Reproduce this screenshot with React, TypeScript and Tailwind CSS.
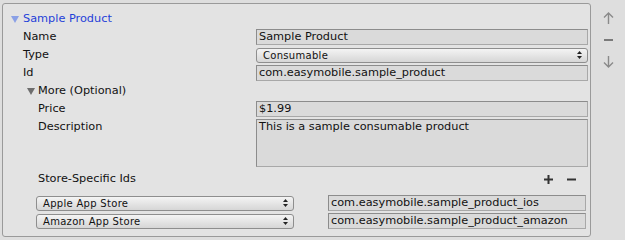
import React from "react";

const font = { fontFamily: '"DejaVu Sans", Verdana, sans-serif' };

const UpDown = () => (
  <svg width="5" height="8" viewBox="0 0 5 8" className="shrink-0">
    <path d="M2.5 0 L5 3 L0 3 Z" fill="#222" />
    <path d="M2.5 8 L5 5 L0 5 Z" fill="#222" />
  </svg>
);

const TextField = ({ value, className = "" }: { value: string; className?: string }) => (
  <div
    className={`h-[16px] border border-[#8c8c8c] border-b-[#a8a8a8] border-r-[#a8a8a8] bg-[#dadada] pl-[2px] text-[11.3px] leading-[14px] text-[#111] whitespace-nowrap overflow-hidden ${className}`}
  >
    {value}
  </div>
);

const Dropdown = ({ value, className = "" }: { value: string; className?: string }) => (
  <div
    className={`h-[15px] flex items-center justify-between rounded-[3px] border border-[#8e8e8e] bg-gradient-to-b from-[#f4f4f4] to-[#d6d6d6] pl-[6px] pr-[5px] text-[10px] leading-[13px] tracking-[0.3px] text-[#111] ${className}`}
  >
    <span>{value}</span>
    <UpDown />
  </div>
);

const Row = ({ label, indent, children }: { label: string; indent?: boolean; children: React.ReactNode }) => (
  <div className={`flex h-[18px] items-center pr-[2px] ${indent ? "pl-[35px]" : "pl-[20px]"}`}>
    <div className={`${indent ? "w-[218px]" : "w-[233px]"} shrink-0 text-[11.3px] text-[#111]`}>{label}</div>
    <div className="flex-1">{children}</div>
  </div>
);

export default function App() {
  return (
    <div className="w-[625px] h-[240px] bg-[#dedede] flex pl-[2px] pt-[3px]" style={font}>
      <div className="w-[589px] h-[234px] shrink-0 rounded-[3px] border border-[#9a9a9a] bg-[#e3e3e3] pt-[6px] flex flex-col">
        <div className="flex h-[18px] items-center pl-[8px]">
          <svg width="8" height="7" viewBox="0 0 8 7" className="mr-[4px]">
            <path d="M0 0 H8 L4 7 Z" fill="#8aa0e6" />
          </svg>
          <span className="text-[11.3px] text-[#1f3fd9]">Sample Product</span>
        </div>
        <Row label="Name">
          <TextField value="Sample Product" />
        </Row>
        <Row label="Type">
          <Dropdown value="Consumable" />
        </Row>
        <Row label="Id">
          <TextField value="com.easymobile.sample_product" />
        </Row>
        <div className="flex h-[18px] items-center pl-[24px]">
          <svg width="8" height="7" viewBox="0 0 8 7" className="mr-[3px]">
            <path d="M0 0 H8 L4 7 Z" fill="#6e6e6e" />
          </svg>
          <span className="text-[11.3px] text-[#111]">More (Optional)</span>
        </div>
        <Row label="Price" indent>
          <TextField value="$1.99" />
        </Row>
        <div className="flex pl-[35px] pr-[2px] pt-[1px]">
          <div className="w-[218px] shrink-0 text-[11.3px] text-[#111] leading-[16px]">Description</div>
          <div className="flex-1">
            <TextField value="This is a sample consumable product" className="h-[48px]" />
          </div>
        </div>
        <div className="flex h-[18px] items-center pl-[35px] pr-[14px] mt-[3px]">
          <span className="flex-1 text-[11.3px] text-[#111]">Store-Specific Ids</span>
          <svg width="9" height="9" viewBox="0 0 9 9" className="mr-[14px]">
            <path d="M4.5 0 V9 M0 4.5 H9" stroke="#333" strokeWidth="2" />
          </svg>
          <svg width="9" height="9" viewBox="0 0 9 9">
            <path d="M0 4.5 H9" stroke="#333" strokeWidth="2" />
          </svg>
        </div>
        <div className="flex flex-col gap-[2px] pl-[33px] mt-[7px]">
          <div className="flex items-center">
            <Dropdown value="Apple App Store" className="w-[258px]" />
            <TextField value="com.easymobile.sample_product_ios" className="w-[258px] ml-[34px]" />
          </div>
          <div className="flex items-center">
            <Dropdown value="Amazon App Store" className="w-[258px]" />
            <TextField value="com.easymobile.sample_product_amazon" className="w-[258px] ml-[34px]" />
          </div>
        </div>
      </div>
      <div className="flex-1 flex flex-col items-center pt-[9px] gap-[12px]">
        <svg width="11" height="12" viewBox="0 0 11 12">
          <path d="M5.5 1 V12 M1 5.5 L5.5 1 L10 5.5" stroke="#8a8a8a" strokeWidth="1.4" fill="none" />
        </svg>
        <svg width="11" height="8" viewBox="0 0 11 8">
          <path d="M1 4 H10" stroke="#7a7a7a" strokeWidth="2" />
        </svg>
        <svg width="11" height="12" viewBox="0 0 11 12">
          <path d="M5.5 0 V11 M1 6.5 L5.5 11 L10 6.5" stroke="#8a8a8a" strokeWidth="1.4" fill="none" />
        </svg>
      </div>
    </div>
  );
}
